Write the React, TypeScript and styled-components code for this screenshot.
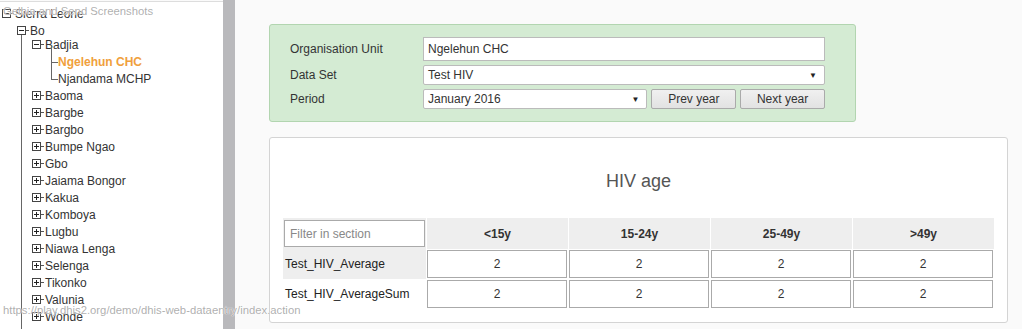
import React from "react";
import styled, { createGlobalStyle } from "styled-components";

const Global = createGlobalStyle`
  html, body { margin: 0; padding: 0; height: 100%; }
  body { font-family: "Liberation Sans", Arial, sans-serif; color: #333; background: #fafafa; }
  * { box-sizing: border-box; }
`;

const Page = styled.div`
  position: relative;
  display: flex;
  height: 329px;
  overflow: hidden;
`;

const Sidebar = styled.div`
  width: 223px;
  flex: none;
  background: #fff;
  border-top: 1px solid #ddd;
  margin-top: 1px;
  padding-top: 3px;
  overflow: hidden;
`;

const Scrollbar = styled.div`
  width: 12px;
  flex: none;
  background: #b9b9bc;
`;

const Main = styled.main`
  flex: 1;
  padding: 24px 0 0 34px;
  background: #fafafa;
`;

const Row = styled.div<{ $level: number; $active?: boolean }>`
  display: flex;
  align-items: center;
  height: 17px;
  padding-left: ${(p) => p.$level * 15 + 2}px;
  font-size: 12px;
  color: ${(p) => (p.$active ? "#f0a03c" : "#333")};
  font-weight: ${(p) => (p.$active ? "bold" : "normal")};
  white-space: nowrap;
`;

const Children = styled.div<{ $line?: number }>`
  position: relative;
  margin-top: -3px;
  ${(p) =>
    p.$line !== undefined
      ? `&::before { content: ""; position: absolute; left: ${p.$line}px; top: -1px; bottom: -10px; border-left: 1px solid #666; }`
      : ""}
`;

const Dash = styled.span`
  display: inline-block;
  width: 3px;
  height: 1px;
  background: #555;
  margin-right: 1px;
`;

const Connector = styled.span`
  position: relative;
  display: inline-block;
  width: 7px;
  height: 17px;
  margin-left: 49px;
  &::before {
    content: "";
    position: absolute;
    left: 0;
    top: -8px;
    width: 6px;
    height: 17px;
    border-left: 1px solid #666;
    border-bottom: 1px solid #666;
  }
`;

const LeafRow = styled(Row)`
  padding-left: 2px;
`;

const Expander = ({ open }: { open: boolean }) => (
  <svg width="9" height="9" viewBox="0 0 9 9" style={{ flex: "none", position: "relative", zIndex: 1 }}>
    <rect x="0.5" y="0.5" width="8" height="8" fill="#fff" stroke="#444" />
    <line x1="2" y1="4.5" x2="7" y2="4.5" stroke="#222" />
    {!open && <line x1="4.5" y1="2" x2="4.5" y2="7" stroke="#222" />}
  </svg>
);

const Node = ({ level, label, open }: { level: number; label: string; open: boolean }) => (
  <Row $level={level}>
    <Expander open={open} />
    <Dash />
    {label}
  </Row>
);

const Watermark = styled.div<{ $top: number }>`
  position: absolute;
  left: 3px;
  top: ${(p) => p.$top}px;
  font-size: 11.3px;
  color: rgba(140, 140, 140, 0.7);
  text-shadow: 0 0 1px #fff, 0 0 1px #fff;
  pointer-events: none;
  white-space: nowrap;
  z-index: 5;
`;

const GreenPanel = styled.section`
  width: 587px;
  height: 98px;
  background: #d4ebd3;
  border: 1px solid #b2d5b0;
  border-radius: 3px;
  padding: 12px 0 0 20px;
  display: grid;
  grid-template-columns: 133px 402px;
  grid-auto-rows: min-content;
  row-gap: 4px;
  align-items: center;
`;

const Label = styled.label`
  font-size: 12px;
  color: #333;
`;

const TextBox = styled.div`
  height: 24px;
  background: #fff;
  border: 1px solid #bbb;
  font-size: 12px;
  padding: 0 4px;
  display: flex;
  align-items: center;
`;

const SelectBox = styled.div<{ $w?: number }>`
  height: 20px;
  width: ${(p) => (p.$w ? `${p.$w}px` : "100%")};
  background: #fff;
  border: 1px solid #bbb;
  border-radius: 2px;
  font-size: 12px;
  padding: 0 4px;
  display: flex;
  align-items: center;
  justify-content: space-between;
`;

const Arrow = styled.span`
  font-size: 8px;
  color: #222;
  margin-right: 3px;
`;

const PeriodRow = styled.div`
  display: flex;
  gap: 4px;
`;

const Button = styled.button`
  width: 85px;
  height: 20px;
  border: 1px solid #aaa;
  border-radius: 2px;
  background: linear-gradient(#f0f0f0, #e2e2e2);
  font: 12px "Liberation Sans", Arial, sans-serif;
  color: #333;
  padding: 0;
`;

const Card = styled.section`
  margin-top: 15px;
  width: 739px;
  height: 186px;
  background: #fff;
  border: 1px solid #d4d4d4;
  border-radius: 3px;
  padding: 0 13px;
  display: flex;
  flex-direction: column;
`;

const Title = styled.h2`
  margin: 33px 0 0;
  height: 47px;
  font-size: 18px;
  font-weight: normal;
  color: #555;
  text-align: center;
`;

const Grid = styled.div`
  display: grid;
  grid-template-columns: 143px repeat(4, 142px);
  grid-template-rows: 31px 30px 30px;
  width: 711px;
`;

const Cell = styled.div<{ $bg?: string }>`
  background: ${(p) => p.$bg || "transparent"};
  display: flex;
  align-items: center;
  padding: 1px;
`;

const HeadCell = styled.div`
  background: #eeeeee;
  border-left: 1px solid #fff;
  display: flex;
  align-items: center;
  justify-content: center;
  font-size: 12px;
  font-weight: bold;
  color: #333;
`;

const Filter = styled.div`
  width: 141px;
  height: 27px;
  background: #fff;
  border: 1px solid #aaa;
  font-size: 12px;
  color: #888;
  display: flex;
  align-items: center;
  padding-left: 5px;
`;

const RowLabel = styled.div<{ $shade?: boolean }>`
  background: ${(p) => (p.$shade ? "#eeeeee" : "transparent")};
  display: flex;
  align-items: center;
  padding-left: 2px;
  font-size: 12px;
  color: #222;
`;

const ValueBox = styled.div`
  flex: 1;
  height: 28px;
  border: 1px solid #aaa;
  background: #fff;
  display: flex;
  align-items: center;
  justify-content: center;
  font-size: 12px;
  color: #333;
`;

const districts = [
  "Baoma", "Bargbe", "Bargbo", "Bumpe Ngao", "Gbo", "Jaiama Bongor", "Kakua",
  "Komboya", "Lugbu", "Niawa Lenga", "Selenga", "Tikonko", "Valunia", "Wonde",
];

const ages = ["<15y", "15-24y", "25-49y", ">49y"];
const rows = ["Test_HIV_Average", "Test_HIV_AverageSum"];

export default function App() {
  return (
    <>
      <Global />
      <Page>
        <Watermark $top={5}>Gelbia and Send Screenshots</Watermark>
        <Watermark $top={304}>https://play.dhis2.org/demo/dhis-web-dataentry/index.action</Watermark>
        <Sidebar>
          <Node level={0} label="Sierra Leone" open />
          <Node level={1} label="Bo" open />
          <Children $line={21}>
            <Node level={2} label="Badjia" open />
            <LeafRow $level={3} $active>
              <Connector />
              Ngelehun CHC
            </LeafRow>
            <LeafRow $level={3}>
              <Connector />
              Njandama MCHP
            </LeafRow>
            {districts.map((d) => (
              <Node key={d} level={2} label={d} open={false} />
            ))}
          </Children>
        </Sidebar>
        <Scrollbar />
        <Main>
          <GreenPanel>
            <Label>Organisation Unit</Label>
            <TextBox>Ngelehun CHC</TextBox>
            <Label>Data Set</Label>
            <SelectBox>
              Test HIV
              <Arrow>▼</Arrow>
            </SelectBox>
            <Label>Period</Label>
            <PeriodRow>
              <SelectBox $w={225}>
                January 2016
                <Arrow>▼</Arrow>
              </SelectBox>
              <Button>Prev year</Button>
              <Button>Next year</Button>
            </PeriodRow>
          </GreenPanel>
          <Card>
            <Title>HIV age</Title>
            <Grid>
              <Cell $bg="#eeeeee">
                <Filter>Filter in section</Filter>
              </Cell>
              {ages.map((a) => (
                <HeadCell key={a}>{a}</HeadCell>
              ))}
              {rows.map((r, i) => (
                <React.Fragment key={r}>
                  <RowLabel $shade={i === 0}>{r}</RowLabel>
                  {ages.map((a) => (
                    <Cell key={a}>
                      <ValueBox>2</ValueBox>
                    </Cell>
                  ))}
                </React.Fragment>
              ))}
            </Grid>
          </Card>
        </Main>
      </Page>
    </>
  );
}
